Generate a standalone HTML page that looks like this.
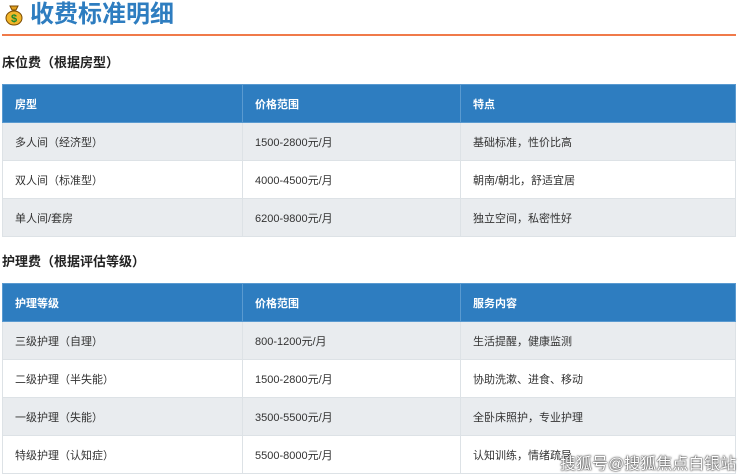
<html><head><style>
body{margin:0;width:740px;height:476px;overflow:hidden;background:#fff;font-family:"Liberation Sans","Noto Sans CJK SC",sans-serif;position:relative}
.t{position:absolute;left:30px;top:0;font-size:24px;font-weight:bold;color:#2e7dc0;line-height:30px}
.ic{position:absolute;left:4px;top:4px}
.line{position:absolute;left:2px;top:34px;width:734px;height:2px;background:#f07a4a}
h3{position:absolute;left:2px;margin:0;font-size:13px;font-weight:bold;color:#222}
table{position:absolute;left:2px;width:734px;border-collapse:collapse;font-size:11px;color:#333}
td,th{border:1px solid #dde2e6;padding:0 0 0 12px;text-align:left;height:38px;box-sizing:border-box}
th{background:#2e7dc0;color:#fff;font-weight:bold;border-color:#5a9ad0}
tr.g td{background:#e9ecef}
.wm{position:absolute;left:560px;top:450px;font-size:16px;color:#fff;text-shadow:0 0 2px #333,0 0 1px #000}
</style></head><body>
<svg class="ic" width="20" height="22" viewBox="0 0 20 22"><path d="M6 2h8l-2 4h-4z" fill="#e0a020" stroke="#7a4a00"/><ellipse cx="10" cy="14" rx="8" ry="7" fill="#f2b52a" stroke="#7a4a00"/><text x="10" y="18" font-size="11" text-anchor="middle" fill="#1a8a2a" font-weight="bold">$</text></svg>
<div class="t">收费标准明细</div>
<div class="line"></div>
<h3 style="top:52px">床位费（根据房型）</h3>
<table style="top:84px">
<tr><th style="width:240px">房型</th><th style="width:218px">价格范围</th><th>特点</th></tr>
<tr class="g"><td>多人间（经济型）</td><td>1500-2800元/月</td><td>基础标准，性价比高</td></tr>
<tr><td>双人间（标准型）</td><td>4000-4500元/月</td><td>朝南/朝北，舒适宜居</td></tr>
<tr class="g"><td>单人间/套房</td><td>6200-9800元/月</td><td>独立空间，私密性好</td></tr>
</table>
<h3 style="top:251px">护理费（根据评估等级）</h3>
<table style="top:283px">
<tr><th style="width:240px">护理等级</th><th style="width:218px">价格范围</th><th>服务内容</th></tr>
<tr class="g"><td>三级护理（自理）</td><td>800-1200元/月</td><td>生活提醒，健康监测</td></tr>
<tr><td>二级护理（半失能）</td><td>1500-2800元/月</td><td>协助洗漱、进食、移动</td></tr>
<tr class="g"><td>一级护理（失能）</td><td>3500-5500元/月</td><td>全卧床照护，专业护理</td></tr>
<tr><td>特级护理（认知症）</td><td>5500-8000元/月</td><td>认知训练，情绪疏导</td></tr>
</table>
<div class="wm">搜狐号@搜狐焦点白银站</div>
</body></html>
